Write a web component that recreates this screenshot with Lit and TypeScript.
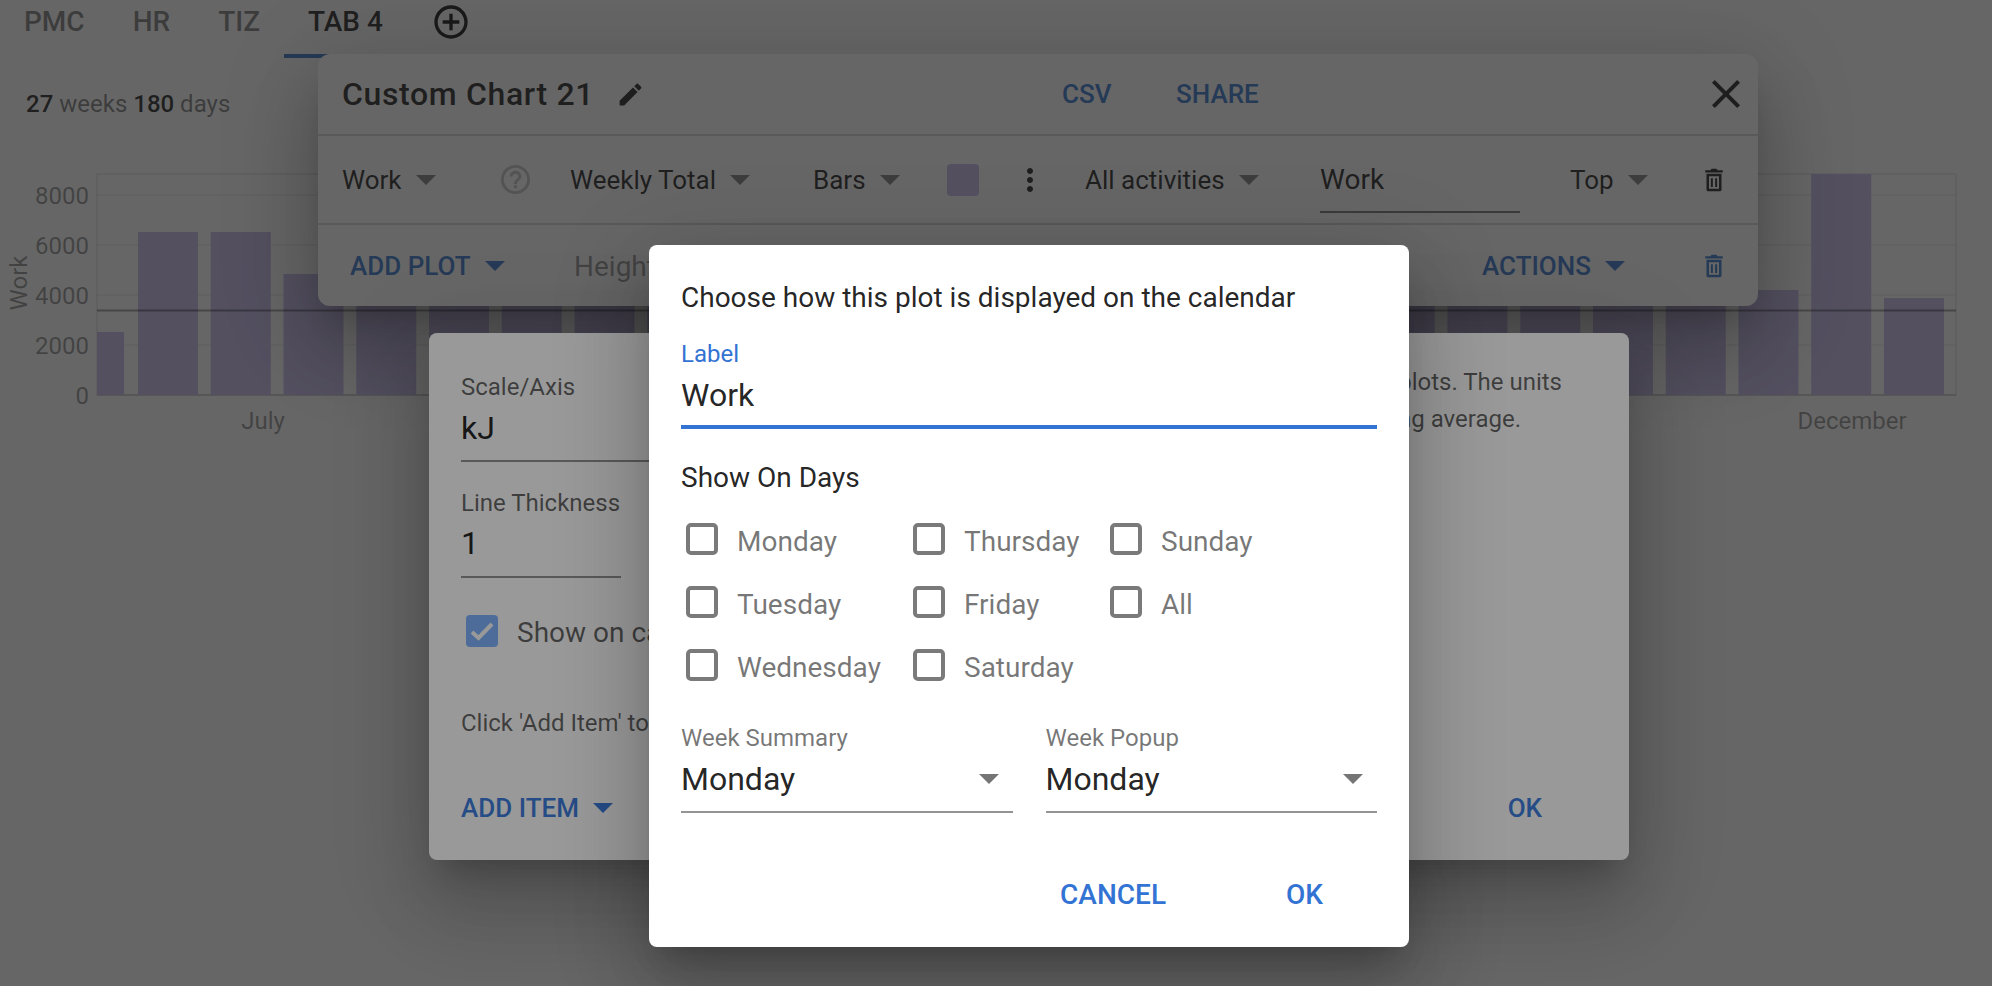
import { LitElement, html, css, svg } from "lit";
import { customElement } from "lit/decorators.js";

const ICONS = {
  edit: "M3 17.25V21h3.75L17.81 9.94l-3.75-3.75L3 17.25zM20.71 7.04c.39-.39.39-1.02 0-1.41l-2.34-2.34c-.39-.39-1.02-.39-1.41 0l-1.83 1.83 3.75 3.75 1.83-1.83z",
  close: "M19 6.41L17.59 5 12 10.59 6.41 5 5 6.41 10.59 12 5 17.59 6.41 19 12 13.41 17.59 19 19 17.59 13.41 12z",
  add: "M13 7h-2v4H7v2h4v4h2v-4h4v-2h-4V7zm-1-5C6.48 2 2 6.48 2 12s4.48 10 10 10 10-4.48 10-10S17.52 2 12 2zm0 18c-4.41 0-8-3.59-8-8s3.59-8 8-8 8 3.59 8 8-3.59 8-8 8z",
  help: "M11 18h2v-2h-2v2zm1-16C6.48 2 2 6.48 2 12s4.48 10 10 10 10-4.48 10-10S17.52 2 12 2zm0 18c-4.41 0-8-3.59-8-8s3.59-8 8-8 8 3.59 8 8-3.59 8-8 8zm0-14c-2.21 0-4 1.79-4 4h2c0-1.1.9-2 2-2s2 .9 2 2c0 2-3 1.75-3 5h2c0-2.25 3-2.5 3-5 0-2.21-1.79-4-4-4z",
  dots: "M12 8c1.1 0 2-.9 2-2s-.9-2-2-2-2 .9-2 2 .9 2 2 2zm0 2c-1.1 0-2 .9-2 2s.9 2 2 2 2-.9 2-2-.9-2-2-2zm0 6c-1.1 0-2 .9-2 2s.9 2 2 2 2-.9 2-2-.9-2-2-2z",
  trash: "M6 7h12v12.5c0 .83-.67 1.5-1.5 1.5h-9C6.67 21 6 20.33 6 19.5V7zm2 2v10h8V9H8zm1.5 1.5h1.6v7H9.5v-7zm3.4 0h1.6v7h-1.6v-7zM5 4.2h4.2L10 3h4l.8 1.2H19V6H5V4.2z",
};

function icon(name: keyof typeof ICONS, cls: string) {
  return html`<svg class="icon ${cls}" viewBox="0 0 24 24"><path d=${ICONS[name]}></path></svg>`;
}

const Y = (v: number) => 395 - (v / 2000) * 50;

function chart() {
  const tops = [232, 232, 274, 250, 250, 250, 250, 250, 250, 250, 250, 250, 250, 250, 250, 250, 250, 250, 250, 250, 250, 250, 290, 174, 298];
  const ticks = [0, 2000, 4000, 6000, 8000];
  return html`<svg class="chart" viewBox="0 130 1992 310" width="1992" height="310">
    ${ticks.map((t) => svg`<line x1="97" x2="1956" y1=${Y(t)} y2=${Y(t)} class=${t === 0 ? "axis" : "grid"}></line>
      <text x="89" y=${Y(t) + 8.5} text-anchor="end" class="tick">${t}</text>`)}
    <rect x="97" y="174" width="1859" height="221" class="frame"></rect>
    <rect x="97" y="332" width="27" height="63" class="bar"></rect>
    ${tops.map((top, i) => svg`<rect x=${138 + i * 72.75} y=${top} width="60" height=${395 - top} class="bar"></rect>`)}
    <line x1="97" x2="1956" y1="310.5" y2="310.5" class="mean"></line>
    <text transform="translate(27 283) rotate(-90)" text-anchor="middle" class="tick">Work</text>
    <text x="263" y="429" text-anchor="middle" class="tick">July</text>
    <text x="1852" y="429" text-anchor="middle" class="tick">December</text>
  </svg>`;
}

const DAYS = ["Monday", "Tuesday", "Wednesday", "Thursday", "Friday", "Saturday", "Sunday", "All"];

@customElement("app-root")
export class AppRoot extends LitElement {
  static styles = css`
    :host {
      display: block;
      position: relative;
      width: 1992px;
      height: 986px;
      overflow: hidden;
      background: #fff;
      font-family: Roboto, "Liberation Sans", sans-serif;
      color: rgba(0, 0, 0, 0.87);
    }
    .icon { display: block; fill: currentColor; }

    .tabs { display: flex; align-items: flex-start; height: 58px; }
    .tab {
      position: relative;
      padding: 0 24px;
      height: 58px;
      line-height: 44px;
      font-size: 28px;
      font-weight: 500;
      color: rgba(0, 0, 0, 0.42);
    }
    .tab.active { color: rgba(0, 0, 0, 0.7); }
    .tab.active::after {
      content: "";
      position: absolute;
      left: 0;
      right: 0;
      bottom: 0;
      height: 4px;
      background: #5f92d8;
    }
    .add-tab { width: 40px; height: 40px; margin: 2px 0 0 24px; color: rgba(0, 0, 0, 0.75); }
    .stats {
      height: 72px;
      padding: 28px 0 0 26px;
      box-sizing: border-box;
      font-size: 24px;
      line-height: 36px;
      color: rgba(0, 0, 0, 0.42);
    }
    .stats b { font-weight: 500; color: rgba(0, 0, 0, 0.7); }
    .chart { display: block; }
    .chart .tick { font-size: 24px; fill: rgba(0, 0, 0, 0.35); font-family: Roboto, sans-serif; }
    .chart .grid { stroke: rgba(0, 0, 0, 0.04); stroke-width: 2; }
    .chart .axis { stroke: rgba(0, 0, 0, 0.1); stroke-width: 2; }
    .chart .frame { fill: none; stroke: rgba(0, 0, 0, 0.06); stroke-width: 2; }
    .chart .bar { fill: #d2c8f0; }
    .chart .mean { stroke: rgba(0, 0, 0, 0.3); stroke-width: 2; }

    .scrim { position: absolute; inset: 0; }
    .scrim.first { background: rgba(0, 0, 0, 0.333); }
    .scrim.second { background: rgba(0, 0, 0, 0.4); }

    .dialog {
      position: absolute;
      box-sizing: border-box;
      background: #fff;
      border-radius: 8px;
      box-shadow: 0 22px 30px -14px rgba(0, 0, 0, 0.2), 0 48px 76px 6px rgba(0, 0, 0, 0.14), 0 18px 92px 16px rgba(0, 0, 0, 0.12);
    }
    .panel { left: 318px; top: 54px; width: 1440px; height: 252px; border-radius: 12px; color: rgba(0, 0, 0, 0.7); }
    .plot { left: 429px; top: 333px; width: 1200px; height: 527px; }
    .cal { left: 649px; top: 245px; width: 760px; height: 702px; padding: 33px 32px 0; }

    .head {
      display: grid;
      grid-template-columns: 720px 114px 526px 48px;
      align-items: center;
      height: 80px;
      padding-left: 24px;
      border-bottom: 2px solid rgba(0, 0, 0, 0.12);
    }
    .title-wrap { display: flex; align-items: center; }
    .title { font-size: 32px; font-weight: 500; letter-spacing: 0.65px; }
    .edit { width: 29px; height: 29px; margin-left: 22px; }
    .close { width: 48px; height: 48px; }
    .blue { color: #3273d3; font-size: 26px; font-weight: 500; }
    .panel .blue { color: #5f92d8; }
    .plot .blue { color: #3f7fe0; }
    .row {
      display: grid;
      grid-template-columns: 159px 69px 243px 134px 69px 69px 235px 250px 130px 28px;
      align-items: center;
      height: 87px;
      padding-left: 24px;
      border-bottom: 2px solid rgba(0, 0, 0, 0.12);
      font-size: 26px;
    }
    .sel { display: flex; align-items: center; gap: 14px; }
    .caret {
      width: 0;
      height: 0;
      border-left: 10px solid transparent;
      border-right: 10px solid transparent;
      border-top: 10px solid rgba(0, 0, 0, 0.54);
    }
    .panel .caret { border-top-color: rgba(0, 0, 0, 0.4); }
    .panel .blue .caret { border-top-color: #5f92d8; }
    .plot .blue .caret { border-top-color: #3f7fe0; }
    .help { width: 35px; height: 35px; margin-left: -3px; color: rgba(0, 0, 0, 0.18); }
    .swatch { width: 32px; height: 32px; border-radius: 4px; background: #d2c8f0; }
    .dots { width: 36px; height: 36px; margin-left: -4px; }
    .work {
      align-self: start;
      width: 200px;
      margin-top: 24px;
      padding-bottom: 11px;
      font-size: 28px;
      line-height: 40px;
      border-bottom: 2px solid rgba(0, 0, 0, 0.42);
    }
    .trash { width: 30px; height: 30px; margin-left: -1px; }
    .actions-row {
      display: grid;
      grid-template-columns: 224px 908px 218px 28px;
      align-items: center;
      height: 82px;
      padding-left: 32px;
    }
    .height { font-size: 28px; color: rgba(0, 0, 0, 0.35); }
    .panel .blue-icon { color: #5f92d8; }

    .plot-top { display: flex; justify-content: space-between; height: 455px; }
    .plot-left { padding: 40px 0 0 32px; }
    .flabel { font-size: 24px; line-height: 28px; color: rgba(0, 0, 0, 0.6); }
    .cal .flabel { color: rgba(0, 0, 0, 0.54); }
    .fvalue { font-size: 32px; line-height: 44px; color: rgba(0, 0, 0, 0.87); }
    .scale-f { margin-top: 5px; width: 300px; padding-bottom: 10px; border-bottom: 2px solid rgba(0, 0, 0, 0.42); }
    .thick-l { margin-top: 27px; }
    .thick-f { margin-top: 4px; width: 160px; padding-bottom: 11px; border-bottom: 2px solid rgba(0, 0, 0, 0.42); }
    .show { display: flex; align-items: center; margin: 34px 0 0 5px; gap: 19px; }
    .checked { width: 32px; height: 32px; border-radius: 4px; background: #82b4ff; }
    .checked svg { display: block; width: 32px; height: 32px; fill: none; stroke: #fff; stroke-width: 4; }
    .show-t { font-size: 28px; color: rgba(0, 0, 0, 0.6); margin-top: 4px; }
    .click { margin-top: 55px; font-size: 24px; line-height: 38px; color: rgba(0, 0, 0, 0.6); white-space: nowrap; }
    .plot-right { padding: 31px 67px 0 0; font-size: 24px; line-height: 37px; text-align: right; color: rgba(0, 0, 0, 0.6); }
    .plot-right .short { padding-right: 41px; }
    .plot-bottom { display: flex; justify-content: space-between; align-items: center; height: 40px; padding: 0 87px 0 32px; }

    .prompt { font-size: 28px; line-height: 40px; }
    .lab-l { margin-top: 22px; font-size: 24px; line-height: 28px; color: #3273d3; }
    .lab-v { margin-top: 5px; padding-bottom: 8px; border-bottom: 4px solid #3273d3; font-size: 32px; line-height: 44px; }
    .days-t { margin-top: 29px; font-size: 28px; line-height: 40px; }
    .days {
      display: grid;
      grid-template-rows: repeat(3, 63px);
      grid-template-columns: 227px 197px 1fr;
      grid-auto-flow: column;
      margin: 25px 0 0 5px;
    }
    .day { display: flex; align-items: flex-start; gap: 19px; font-size: 28px; line-height: 40px; color: rgba(0, 0, 0, 0.54); }
    .box { width: 32px; height: 32px; box-sizing: border-box; border: 4px solid #7a7a7a; border-radius: 5px; }
    .day span { margin-top: -1px; }
    .weeks { display: grid; grid-template-columns: 1fr 1fr; gap: 33px; margin-top: 12px; }
    .wsel { display: flex; align-items: center; justify-content: space-between; margin-top: 5px; padding: 0 14px 10px 0; border-bottom: 2px solid rgba(0, 0, 0, 0.42); }
    .foot { display: flex; justify-content: flex-end; gap: 120px; margin: 62px 54px 0 0; line-height: 40px; }
    .cal .blue { font-size: 28px; }
  `;

  render() {
    return html`
      <div class="tabs">
        <div class="tab">PMC</div>
        <div class="tab">HR</div>
        <div class="tab">TIZ</div>
        <div class="tab active">TAB 4</div>
        ${icon("add", "add-tab")}
      </div>
      <div class="stats"><b>27</b> weeks <b>180</b> days</div>
      ${chart()}

      <section class="dialog panel">
        <div class="head">
          <div class="title-wrap"><span class="title">Custom Chart 21</span>${icon("edit", "edit")}</div>
          <span class="blue">CSV</span>
          <span class="blue">SHARE</span>
          ${icon("close", "close")}
        </div>
        <div class="row">
          <div class="sel">Work <i class="caret"></i></div>
          ${icon("help", "help")}
          <div class="sel">Weekly Total <i class="caret"></i></div>
          <div class="sel">Bars <i class="caret"></i></div>
          <div class="swatch"></div>
          ${icon("dots", "dots")}
          <div class="sel">All activities <i class="caret"></i></div>
          <div class="work">Work</div>
          <div class="sel">Top <i class="caret"></i></div>
          ${icon("trash", "trash")}
        </div>
        <div class="actions-row">
          <div class="sel blue">ADD PLOT <i class="caret"></i></div>
          <span class="height">Height</span>
          <div class="sel blue">ACTIONS <i class="caret"></i></div>
          ${icon("trash", "trash blue-icon")}
        </div>
      </section>
      <div class="scrim first"></div>

      <section class="dialog plot">
        <div class="plot-top">
          <div class="plot-left">
            <div class="flabel">Scale/Axis</div>
            <div class="fvalue scale-f">kJ</div>
            <div class="flabel thick-l">Line Thickness</div>
            <div class="fvalue thick-f">1</div>
            <div class="show">
              <div class="checked"><svg viewBox="0 0 32 32"><path d="M6 17l6.5 6L26 9"></path></svg></div>
              <span class="show-t">Show on calendar</span>
            </div>
            <div class="click">Click 'Add Item' to add data</div>
          </div>
          <div class="plot-right">
            <div>Each item is drawn on one of the chart's plots. The units</div>
            <div class="short">follow the selected scale, including average.</div>
          </div>
        </div>
        <div class="plot-bottom">
          <div class="sel blue">ADD ITEM <i class="caret"></i></div>
          <span class="blue">OK</span>
        </div>
      </section>
      <div class="scrim second"></div>

      <section class="dialog cal">
        <div class="prompt">Choose how this plot is displayed on the calendar</div>
        <div class="lab-l">Label</div>
        <div class="lab-v">Work</div>
        <div class="days-t">Show On Days</div>
        <div class="days">
          ${DAYS.map((d) => html`<div class="day"><i class="box"></i><span>${d}</span></div>`)}
        </div>
        <div class="weeks">
          <div>
            <div class="flabel">Week Summary</div>
            <div class="fvalue wsel">Monday <i class="caret"></i></div>
          </div>
          <div>
            <div class="flabel">Week Popup</div>
            <div class="fvalue wsel">Monday <i class="caret"></i></div>
          </div>
        </div>
        <div class="foot"><span class="blue">CANCEL</span><span class="blue">OK</span></div>
      </section>
    `;
  }
}
